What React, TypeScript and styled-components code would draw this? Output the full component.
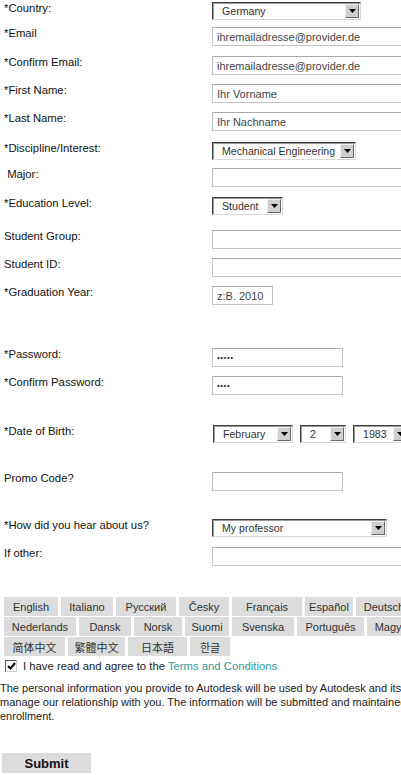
import styled, { createGlobalStyle } from "styled-components"

const GlobalStyle = createGlobalStyle`
  html, body {
    margin: 0;
    padding: 0;
    background: #fff;
    overflow: hidden;
  }
  body {
    font-family: "Liberation Sans", Arial, sans-serif;
    font-size: 11.3px;
    color: #111;
  }
`

const Page = styled.div`
  width: 401px;
  height: 775px;
  overflow: hidden;
  padding-top: 2px;
  box-sizing: border-box;
`

const Row = styled.div<{ $h: number }>`
  display: grid;
  grid-template-columns: 208px 1fr;
  align-items: start;
  height: ${props => props.$h}px;
  padding-left: 4px;
`

const Label = styled.div`
  margin-top: -1px;
  line-height: 14px;
  white-space: nowrap;
`

const TextInput = styled.input<{ $w: number }>`
  box-sizing: border-box;
  width: ${props => props.$w}px;
  height: 19px;
  margin: 0;
  padding: 0 4px;
  border: 1px solid #c4c4c4;
  border-top-color: #a8a8a8;
  font-family: "Liberation Sans", Arial, sans-serif;
  font-size: 11px;
  color: #444;
  background: #fff;
  outline: none;
`

const DotsInput = styled(TextInput)`
  font-size: 8px;
  letter-spacing: 0.5px;
  color: #333;
`

const Selects = styled.div`
  display: flex;
  gap: 7px;
  padding-left: 1px;
`

const SelectBox = styled.div<{ $w: number }>`
  box-sizing: border-box;
  width: ${props => props.$w}px;
  height: 18px;
  display: flex;
  align-items: center;
  justify-content: space-between;
  border: 1px solid;
  border-color: #404040 #d8d8d8 #d8d8d8 #404040;
  box-shadow: inset 1px 1px 0 #9a9a9a;
  background: #fff;
  padding: 0 1px 0 9px;
  color: #333;
  font-size: 10.6px;
  white-space: nowrap;
  overflow: hidden;
  flex-shrink: 0;
`

const ArrowBox = styled.span`
  box-sizing: border-box;
  width: 14px;
  height: 14px;
  flex-shrink: 0;
  display: flex;
  align-items: center;
  justify-content: center;
  background: #cfcfcf;
  border: 1px solid;
  border-color: #f0f0f0 #6a6a6a #6a6a6a #f0f0f0;
  margin-left: 4px;
`

const Languages = styled.div`
  padding-left: 4px;
  display: flex;
  flex-direction: column;
  gap: 1px;
`

const LangRow = styled.div`
  display: flex;
  gap: 3px;
`

const LangButton = styled.div<{ $w: number }>`
  width: ${props => props.$w}px;
  height: 19px;
  flex-shrink: 0;
  display: flex;
  align-items: center;
  justify-content: center;
  background: #dcdcdc;
  color: #333;
  font-size: 11px;
  font-family: "Liberation Sans", "Noto Sans CJK SC", "Noto Sans CJK KR", sans-serif;
  white-space: nowrap;
  overflow: hidden;
`

const Agree = styled.div`
  display: flex;
  align-items: center;
  margin-top: 3px;
  padding-left: 5px;
  gap: 6px;
  height: 13px;
  color: #222;
`

const CheckBox = styled.span`
  box-sizing: border-box;
  width: 12px;
  height: 12px;
  border: 1px solid;
  border-color: #555 #ccc #ccc #555;
  background: #fff;
  display: flex;
  align-items: center;
  justify-content: center;
`

const TermsLink = styled.a`
  color: #2e9c9c;
  text-decoration: none;
`

const Notice = styled.p`
  margin: 9px 0 0 0;
  font-size: 11px;
  line-height: 14px;
  white-space: nowrap;
  color: #222;
`

const SubmitButton = styled.button`
  display: block;
  margin: 30px 0 0 2px;
  width: 89px;
  height: 20px;
  border: none;
  background: #dcdcdc;
  font-family: "Liberation Sans", Arial, sans-serif;
  font-weight: bold;
  font-size: 13px;
  color: #111;
  padding: 0;
`

function Arrow() {
  return (
    <ArrowBox>
      <svg width="7" height="4" viewBox="0 0 7 4">
        <polygon points="0,0 7,0 3.5,4" fill="#000" />
      </svg>
    </ArrowBox>
  )
}

function Select({ value, w }: { value: string; w: number }) {
  return (
    <SelectBox $w={w}>
      <span>{value}</span>
      <Arrow />
    </SelectBox>
  )
}

const languages = [
  [
    ["English", 54], ["Italiano", 52], ["Русский", 60], ["Česky", 50],
    ["Français", 70], ["Español", 48], ["Deutsch", 56],
  ],
  [
    ["Nederlands", 72], ["Dansk", 52], ["Norsk", 48], ["Suomi", 44],
    ["Svenska", 62], ["Português", 67], ["Magyar", 52],
  ],
  [
    ["简体中文", 61], ["繁體中文", 57], ["日本語", 59], ["한글", 40],
  ],
] as [string, number][][]

export default function App() {
  return (
    <Page>
      <GlobalStyle />
      <Row $h={25}>
        <Label>*Country:</Label>
        <Select value="Germany" w={149} />
      </Row>
      <Row $h={29}>
        <Label>*Email</Label>
        <TextInput $w={200} defaultValue="ihremailadresse@provider.de" />
      </Row>
      <Row $h={28}>
        <Label>*Confirm Email:</Label>
        <TextInput $w={200} defaultValue="ihremailadresse@provider.de" />
      </Row>
      <Row $h={28}>
        <Label>*First Name:</Label>
        <TextInput $w={200} defaultValue="Ihr Vorname" />
      </Row>
      <Row $h={30}>
        <Label>*Last Name:</Label>
        <TextInput $w={200} defaultValue="Ihr Nachname" />
      </Row>
      <Row $h={26}>
        <Label>*Discipline/Interest:</Label>
        <Select value="Mechanical Engineering" w={144} />
      </Row>
      <Row $h={29}>
        <Label>&nbsp;Major:</Label>
        <TextInput $w={200} />
      </Row>
      <Row $h={33}>
        <Label>*Education Level:</Label>
        <Select value="Student" w={71} />
      </Row>
      <Row $h={28}>
        <Label>Student Group:</Label>
        <TextInput $w={200} />
      </Row>
      <Row $h={28}>
        <Label>Student ID:</Label>
        <TextInput $w={200} />
      </Row>
      <Row $h={62}>
        <Label>*Graduation Year:</Label>
        <TextInput $w={61} defaultValue="z:B. 2010" />
      </Row>
      <Row $h={28}>
        <Label>*Password:</Label>
        <DotsInput $w={131} defaultValue="•••••" />
      </Row>
      <Row $h={49}>
        <Label>*Confirm Password:</Label>
        <DotsInput $w={131} defaultValue="••••" />
      </Row>
      <Row $h={47}>
        <Label>*Date of Birth:</Label>
        <Selects>
          <Select value="February" w={80} />
          <Select value="2" w={46} />
          <Select value="1983" w={56} />
        </Selects>
      </Row>
      <Row $h={47}>
        <Label>Promo Code?</Label>
        <TextInput $w={131} />
      </Row>
      <Row $h={28}>
        <Label>*How did you hear about us?</Label>
        <Select value="My professor" w={175} />
      </Row>
      <Row $h={50}>
        <Label>If other:</Label>
        <TextInput $w={200} />
      </Row>
      <Languages>
        {languages.map((row, i) => (
          <LangRow key={i}>
            {row.map(([name, w]) => (
              <LangButton key={name} $w={w}>{name}</LangButton>
            ))}
          </LangRow>
        ))}
      </Languages>
      <Agree>
        <CheckBox>
          <svg width="9" height="8" viewBox="0 0 9 8">
            <polyline points="1,4 3.5,6.5 8,1" fill="none" stroke="#000" strokeWidth="2" />
          </svg>
        </CheckBox>
        <span>
          I have read and agree to the <TermsLink href="#">Terms and Conditions</TermsLink>
        </span>
      </Agree>
      <Notice>
        The personal information you provide to Autodesk will be used by Autodesk and its
        <br />
        manage our relationship with you. The information will be submitted and maintained
        <br />
        enrollment.
      </Notice>
      <SubmitButton>Submit</SubmitButton>
    </Page>
  )
}
